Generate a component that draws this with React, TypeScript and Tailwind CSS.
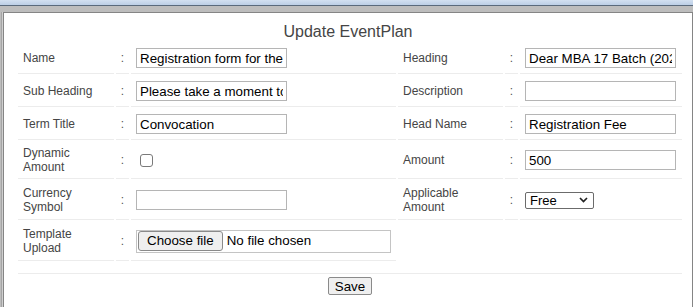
import React from "react";

const font = "font-['Liberation_Sans',Arial,sans-serif]";

function Label({ children }: { children: React.ReactNode }) {
  return (
    <td className="border-b border-[#ececec] px-[5px] py-0 align-middle text-[12px] leading-[14px] text-[#454545]">
      {children}
    </td>
  );
}

function Colon() {
  return (
    <td className="border-b border-[#ececec] py-0 text-center align-middle text-[12px] leading-[14px] text-[#555]">
      :
    </td>
  );
}

function Field({ children }: { children: React.ReactNode }) {
  return <td className="border-b border-[#ececec] px-[5px] py-0 align-middle">{children}</td>;
}

function TextBox({ value }: { value: string }) {
  return (
    <input
      type="text"
      readOnly
      defaultValue={value}
      className="block w-[151px] h-[20px] border border-[#b5b5b5] bg-white px-[3px] text-[13.33px] leading-[18px] text-black outline-none"
    />
  );
}

export default function App() {
  return (
    <div className={`w-[693px] h-[307px] overflow-hidden bg-[#cdcdcd] ${font} flex flex-col`}>
      {/* top window chrome */}
      <div className="h-[5px] bg-gradient-to-b from-[#d3e0f1] to-[#bccfe6]" />
      <div className="h-px bg-[#5a6a7c]" />
      <div className="flex-1 flex flex-col pt-[6px] bg-[#bdbdbd]">
        <div className="flex-1 flex pl-px">
          <div className="flex-1 flex border-l border-[#a5a5a5] pl-px bg-[#cfcfcf]">
            <div className="flex-1 bg-white border-l border-t border-r border-[#858585]">
              <div className="pt-[10px] text-center text-[16px] leading-[18px] text-[#454545]">Update EventPlan</div>

              <table className="ml-[12px] w-[668px] table-fixed border-separate border-spacing-[2px]">
                <colgroup>
                  <col className="w-[96px]" />
                  <col className="w-[13px]" />
                  <col className="w-[265px]" />
                  <col className="w-[105px]" />
                  <col className="w-[13px]" />
                  <col className="w-[162px]" />
                </colgroup>
                <tbody>
                  <tr className="h-[31px]">
                    <Label>Name</Label>
                    <Colon />
                    <Field><TextBox value="Registration form for the MBA 17 Batch" /></Field>
                    <Label>Heading</Label>
                    <Colon />
                    <Field><TextBox value="Dear MBA 17 Batch (2023-2025)" /></Field>
                  </tr>
                  <tr className="h-[31px]">
                    <Label>Sub Heading</Label>
                    <Colon />
                    <Field><TextBox value="Please take a moment to fill the form" /></Field>
                    <Label>Description</Label>
                    <Colon />
                    <Field><TextBox value="" /></Field>
                  </tr>
                  <tr className="h-[31px]">
                    <Label>Term Title</Label>
                    <Colon />
                    <Field><TextBox value="Convocation" /></Field>
                    <Label>Head Name</Label>
                    <Colon />
                    <Field><TextBox value="Registration Fee" /></Field>
                  </tr>
                  <tr className="h-[37px]">
                    <Label>Dynamic<br />Amount</Label>
                    <Colon />
                    <Field>
                      <input
                        type="checkbox"
                        className="block appearance-none ml-[4px] w-[13px] h-[13px] border border-[#7a7a7a] rounded-[3px] bg-white"
                      />
                    </Field>
                    <Label>Amount</Label>
                    <Colon />
                    <Field><TextBox value="500" /></Field>
                  </tr>
                  <tr className="h-[39px]">
                    <Label>Currency<br />Symbol</Label>
                    <Colon />
                    <Field><TextBox value="" /></Field>
                    <Label>Applicable<br />Amount</Label>
                    <Colon />
                    <Field>
                      <div className="flex items-center justify-between w-[69px] h-[17px] border border-[#6b6b6b] rounded-[2px] bg-white pl-[4px] pr-[5px] text-[13px] leading-[15px] text-black">
                        <span>Free</span>
                        <svg width="9" height="6" viewBox="0 0 9 6" fill="none">
                          <path d="M1 1l3.5 3.5L8 1" stroke="#222" strokeWidth="1.7" />
                        </svg>
                      </div>
                    </Field>
                  </tr>
                  <tr className="h-[39px]">
                    <Label>Template<br />Upload</Label>
                    <Colon />
                    <Field>
                      <div className="flex items-center w-[255px] h-[23px] border border-[#c4c4c4] bg-white pl-px">
                        <button className="h-[20px] px-[8px] border border-[#8a8a8a] rounded-[3px] bg-[#efefef] text-[13.33px] leading-[16px] text-black">
                          Choose file
                        </button>
                        <span className="ml-[4px] text-[13.33px] leading-[16px] text-black">No file chosen</span>
                      </div>
                    </Field>
                  </tr>
                  <tr>
                    <td colSpan={6} className="h-[11px] p-0 border-b border-[#ececec]" />
                  </tr>
                  <tr>
                    <td colSpan={6} className="p-0">
                      <button className="block mx-auto mt-[1px] h-[18px] px-[6px] border border-[#8a8a8a] rounded-[2px] bg-[#efefef] text-[13.33px] leading-[15px] text-black">
                        Save
                      </button>
                    </td>
                  </tr>
                </tbody>
              </table>
            </div>
          </div>
        </div>
      </div>
    </div>
  );
}
